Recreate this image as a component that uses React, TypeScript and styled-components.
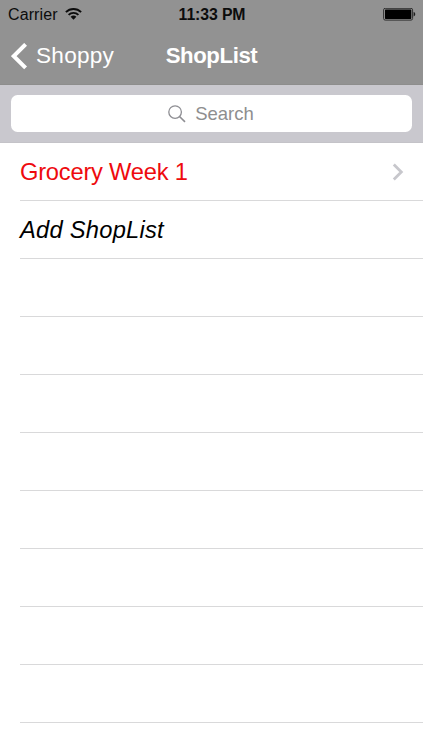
import React from 'react';
import styled, { createGlobalStyle } from 'styled-components';

const GlobalStyle = createGlobalStyle`
  * { box-sizing: border-box; }
  html, body { margin: 0; padding: 0; background: #fff; }
  body { overflow: hidden; }
`;

const Screen = styled.div`
  width: 423px;
  height: 750px;
  overflow: hidden;
  display: flex;
  flex-direction: column;
  background: #fff;
  font-family: "Liberation Sans", Arial, sans-serif;
`;

const Header = styled.header`
  flex: none;
  height: 85px;
  background: #929292;
  border-bottom: 1px solid #8d8d8c;
`;

const StatusBar = styled.div`
  height: 28px;
  padding: 0 7px 0 8px;
  display: grid;
  grid-template-columns: 1fr auto 1fr;
  align-items: center;
  color: #0c0c0c;
  font-size: 16px;
  line-height: 28px;
`;

const Carrier = styled.div`
  display: flex;
  align-items: center;
  gap: 7px;
  letter-spacing: 0.1px;

  span {
    padding-top: 1px;
    line-height: 27px;
  }
`;

const Clock = styled.div`
  padding-top: 1px;
  font-size: 15.8px;
  font-weight: 700;
  line-height: 27px;
  letter-spacing: -0.1px;
`;

const Battery = styled.svg`
  justify-self: end;
`;

const NavBar = styled.nav`
  height: 56px;
  padding: 0 11px;
  display: grid;
  grid-template-columns: 1fr auto 1fr;
  align-items: center;
  color: #fff;
`;

const BackButton = styled.button`
  border: 0;
  padding: 0;
  background: none;
  color: inherit;
  font: 22.6px/56px "Liberation Sans", Arial, sans-serif;
  letter-spacing: 0.25px;
  display: flex;
  align-items: center;
  gap: 8px;
`;

const Title = styled.h1`
  margin: 0;
  font-size: 22.2px;
  font-weight: 700;
  line-height: 56px;
  letter-spacing: -0.4px;
`;

const SearchBar = styled.div`
  flex: none;
  height: 58px;
  padding: 10px 11px 11px;
  background: #c9c8ce;
  border-bottom: 1px solid #c4c3c8;
`;

const SearchField = styled.div`
  height: 37px;
  padding-right: 1px;
  border-radius: 6.5px;
  background: #fff;
  color: #8e8e8f;
  display: flex;
  align-items: center;
  justify-content: center;
  gap: 9px;
  font-size: 18.5px;
  line-height: 37px;
`;

const List = styled.ul`
  list-style: none;
  margin: 0;
  padding: 0 0 0 20px;
`;

const Row = styled.li<{ $color?: string; $italic?: boolean; $spacing?: string }>`
  height: 58px;
  padding-right: 19px;
  border-bottom: 1px solid #d9d9da;
  display: flex;
  align-items: center;
  justify-content: space-between;
  color: ${(p) => p.$color ?? '#000'};
  font-size: 23.7px;
  font-style: ${(p) => (p.$italic ? 'italic' : 'normal')};
  letter-spacing: ${(p) => p.$spacing ?? 'normal'};
`;

const RowLabel = styled.span`
  padding-top: 2px;
`;

const items = [
  { label: 'Grocery Week 1', color: '#ee0a0e', italic: false, link: true, spacing: '-0.22px' },
  { label: 'Add ShopList', color: '#000', italic: true, link: false, spacing: '0.25px' },
];

const EMPTY_ROWS = 8;

export default function App() {
  return (
    <Screen>
      <GlobalStyle />
      <Header>
        <StatusBar>
          <Carrier>
            <span>Carrier</span>
            <svg width="17" height="13" viewBox="0 0 17 13" fill="none" stroke="#0c0c0c" strokeWidth="1.9">
              <path d="M0.9 4.1a10.8 10.8 0 0 1 15.2 0" />
              <path d="M3.6 6.9a7 7 0 0 1 9.8 0" />
              <path d="M8.5 11.8 5.6 8.8a4.2 4.2 0 0 1 5.8 0z" fill="#0c0c0c" stroke="none" />
            </svg>
          </Carrier>
          <Clock>11:33 PM</Clock>
          <Battery width="33" height="13" viewBox="0 0 33 13">
            <rect x="0.6" y="0.3" width="29" height="11.8" rx="1.6" fill="#929292" stroke="#303030" strokeWidth="1" />
            <rect x="2" y="1.5" width="26.3" height="9.4" rx="0.6" fill="#000" />
            <path d="M30.6 4c2.2.4 2.2 4 0 4.4z" fill="#1c1c1c" />
          </Battery>
        </StatusBar>
        <NavBar>
          <BackButton>
            <svg width="17" height="27" viewBox="0 0 17 27" fill="none" stroke="#fff" strokeWidth="4">
              <path d="M14.6 1.3 2.8 13.1l11.8 11.8" />
            </svg>
            <span>Shoppy</span>
          </BackButton>
          <Title>ShopList</Title>
        </NavBar>
      </Header>
      <SearchBar>
        <SearchField>
          <svg width="18" height="18" viewBox="0 0 18 18" fill="none" stroke="#8e8e93" strokeWidth="1.3">
            <circle cx="7.1" cy="7.1" r="6.3" />
            <path d="m11.5 11.5 5.5 5.3" strokeWidth="1.6" />
          </svg>
          <span>Search</span>
        </SearchField>
      </SearchBar>
      <List>
        {items.map((item) => (
          <Row key={item.label} $color={item.color} $italic={item.italic} $spacing={item.spacing}>
            <RowLabel>{item.label}</RowLabel>
            {item.link && (
              <svg width="12" height="18" viewBox="0 0 12 18" fill="none" stroke="#c7c7cc" strokeWidth="2.8">
                <path d="m1.8 1.4 7.5 7.6-7.5 7.6" />
              </svg>
            )}
          </Row>
        ))}
        {Array.from({ length: EMPTY_ROWS }, (_, i) => (
          <Row key={i} />
        ))}
      </List>
    </Screen>
  );
}
